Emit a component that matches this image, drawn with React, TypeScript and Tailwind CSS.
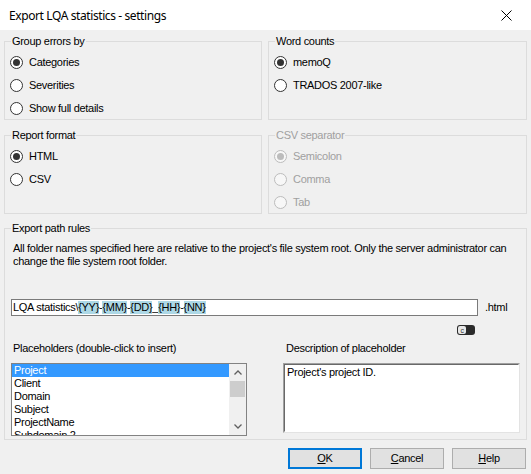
import React from "react";

function Radio({ checked, disabled, label }: { checked?: boolean; disabled?: boolean; label: string }) {
  return (
    <div className="flex h-[23px] items-center gap-[6px] pl-[5px]">
      <span
        className={
          disabled
            ? "flex h-[13px] w-[13px] items-center justify-center rounded-full border border-[#bcbcbc] bg-[#f7f7f7]"
            : "flex h-[13px] w-[13px] items-center justify-center rounded-full border border-[#333333] bg-white"
        }
      >
        {checked && (
          <span className={disabled ? "h-[7px] w-[7px] rounded-full bg-[#bcbcbc]" : "h-[7px] w-[7px] rounded-full bg-[#333333]"} />
        )}
      </span>
      <span className={disabled ? "text-[#a0a0a0]" : "text-black"}>{label}</span>
    </div>
  );
}

function Group({ title, disabled, children }: { title: string; disabled?: boolean; children: React.ReactNode }) {
  return (
    <fieldset className="h-[85px] min-w-0 border border-[#dcdcdc]">
      <legend className={disabled ? "ml-[6px] px-[1px] leading-[13px] text-[#a0a0a0]" : "ml-[6px] px-[1px] leading-[13px]"}>{title}</legend>
      <div className="flex flex-col pt-[3px]">{children}</div>
    </fieldset>
  );
}

function Ph({ t }: { t: string }) {
  return <span className="bg-[#add8e6]">{t}</span>;
}

export default function App() {
  const items = ["Project", "Client", "Domain", "Subject", "ProjectName", "Subdomain 2"];
  return (
    <div className="flex h-[474px] w-[531px] flex-col overflow-hidden bg-[#f0f0f0] font-['Liberation_Sans',Arial,sans-serif] text-[11px] leading-[13px] tracking-[-0.3px] text-black">
      <div className="flex h-[30px] shrink-0 items-center justify-between bg-white pl-[9px] pr-[19px]">
        <span className="font-['Noto_Sans',sans-serif] text-[12px] tracking-[-0.4px]">Export LQA statistics - settings</span>
        <svg width="11" height="11" viewBox="0 0 11 11">
          <path d="M0.5 0.5 L10.5 10.5 M10.5 0.5 L0.5 10.5" stroke="#000" strokeWidth="1" />
        </svg>
      </div>
      <div className="flex flex-1 flex-col px-[4px] pt-[5px]">
        <div className="grid grid-cols-[258px_259px] gap-x-[6px] gap-y-[9px]">
          <Group title="Group errors by">
            <Radio checked label="Categories" />
            <Radio label="Severities" />
            <Radio label="Show full details" />
          </Group>
          <Group title="Word counts">
            <Radio checked label="memoQ" />
            <Radio label="TRADOS 2007-like" />
          </Group>
          <Group title="Report format">
            <Radio checked label="HTML" />
            <Radio label="CSV" />
          </Group>
          <Group title="CSV separator" disabled>
            <Radio checked disabled label="Semicolon" />
            <Radio disabled label="Comma" />
            <Radio disabled label="Tab" />
          </Group>
        </div>

        <fieldset className="mt-[8px] h-[218px] min-w-0 border border-[#dcdcdc]">
          <legend className="ml-[6px] px-[1px] leading-[13px]">Export path rules</legend>
          <div className="mt-[7px] pl-[8px]">
            <div className="whitespace-nowrap">
              All folder names specified here are relative to the project's file system root. Only the server administrator can
            </div>
            <div className="whitespace-nowrap">change the file system root folder.</div>
          </div>
          <div className="mt-[31px] flex items-center gap-[7px] pl-[6px]">
            <div className="flex h-[17px] w-[467px] items-center whitespace-nowrap border border-[#7a7a7a] bg-white pl-[1px]">
              {"LQA statistics\\"}
              <Ph t="{YY}" />-<Ph t="{MM}" />-<Ph t="{DD}" />_<Ph t="{HH}" />-<Ph t="{NN}" />
            </div>
            <span>.html</span>
          </div>
          <div className="mt-[9px] flex h-[10px] w-[473px] justify-end pr-[3px]">
            <svg width="18" height="10" viewBox="0 0 18 10">
              <rect x="0" y="0" width="18" height="10" rx="3" fill="#2b2b2b" />
              <rect x="1" y="1" width="8" height="8" rx="2" fill="#e8e8e8" />
              <text x="5" y="7.6" fontSize="7" textAnchor="middle" fill="#333" fontFamily="Liberation Sans, Arial, sans-serif">
                c
              </text>
            </svg>
          </div>
          <div className="mt-[7px] grid grid-cols-[236px_237px] gap-x-[36px] pl-[6px]">
            <div className="pl-[2px]">Placeholders (double-click to insert)</div>
            <div className="pl-[3px]">Description of placeholder</div>
            <div className="mt-[8px] flex h-[73px] overflow-hidden border border-[#828282] bg-white">
              <div className="flex-1 overflow-hidden">
                {items.map((it, i) => (
                  <div
                    key={it}
                    className={i === 0 ? "h-[13px] bg-[#3399ff] pl-[2px] text-white" : "h-[13px] pl-[2px]"}
                  >
                    {it}
                  </div>
                ))}
              </div>
              <div className="flex w-[17px] flex-col bg-[#f0f0f0]">
                <div className="flex h-[17px] items-center justify-center">
                  <svg width="8" height="5" viewBox="0 0 8 5">
                    <path d="M0.5 4.5 L4 1 L7.5 4.5" fill="none" stroke="#606060" strokeWidth="1.3" />
                  </svg>
                </div>
                <div className="flex-1 px-[1px]">
                  <div className="h-[16px] bg-[#cdcdcd]" />
                </div>
                <div className="flex h-[17px] items-center justify-center">
                  <svg width="8" height="5" viewBox="0 0 8 5">
                    <path d="M0.5 0.5 L4 4 L7.5 0.5" fill="none" stroke="#606060" strokeWidth="1.3" />
                  </svg>
                </div>
              </div>
            </div>
            <div className="mt-[8px] h-[70px] border border-b-[#e3e3e3] border-l-[#a0a0a0] border-r-[#e3e3e3] border-t-[#a0a0a0]">
              <div className="h-full border border-b-white border-l-[#696969] border-r-white border-t-[#696969] bg-white pl-[2px] pt-[1px]">
                Project's project ID.
              </div>
            </div>
          </div>
        </fieldset>

        <div className="mt-[8px] flex justify-end gap-[8px] pr-[1px]">
          <button className="h-[21px] w-[74px] border-2 border-[#0078d7] bg-[#e1e1e1] leading-[13px]">
            <span className="underline">O</span>K
          </button>
          <button className="h-[21px] w-[74px] border border-[#adadad] bg-[#e1e1e1] leading-[13px]">
            <span className="underline">C</span>ancel
          </button>
          <button className="h-[21px] w-[74px] border border-[#adadad] bg-[#e1e1e1] leading-[13px]">
            <span className="underline">H</span>elp
          </button>
        </div>
      </div>
    </div>
  );
}
